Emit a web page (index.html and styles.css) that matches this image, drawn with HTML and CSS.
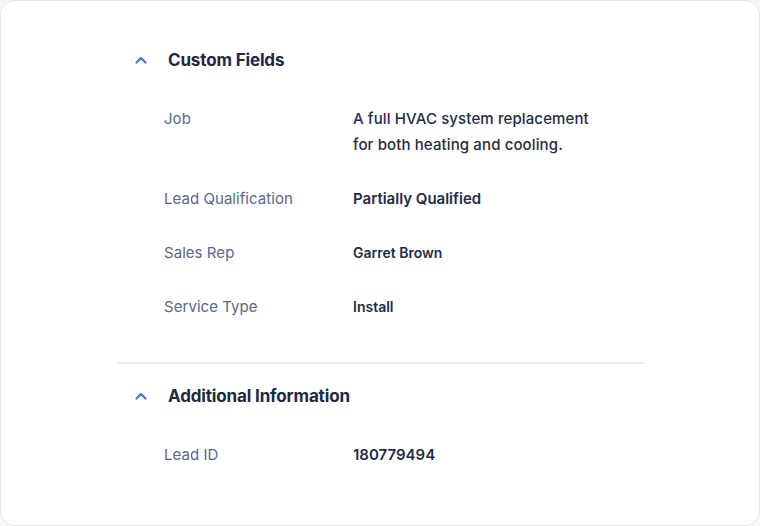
FILE: index.html
```html
<!DOCTYPE html>
<html>
<head>
<meta charset="utf-8">
<link rel="stylesheet" href="styles.css">
</head>
<body>
<div class="card">
  <section class="section">
    <div class="section-header">
      <svg class="chevron" width="12" height="8" viewBox="0 0 12 8"><path d="M1.5 6.5 L6 2 L10.5 6.5" fill="none" stroke="#4477cc" stroke-width="2.2" stroke-linecap="round" stroke-linejoin="round"/></svg>
      <h2 class="section-title">Custom Fields</h2>
    </div>
    <div class="rows">
      <div class="row"><div class="label">Job</div><div class="value wide">A full HVAC system replacement<br>for both heating and cooling.</div></div>
      <div class="row"><div class="label">Lead Qualification</div><div class="value strong">Partially Qualified</div></div>
      <div class="row"><div class="label">Sales Rep</div><div class="value small">Garret Brown</div></div>
      <div class="row"><div class="label">Service Type</div><div class="value small">Install</div></div>
    </div>
  </section>
  <div class="divider"></div>
  <section class="section">
    <div class="section-header">
      <svg class="chevron" width="12" height="8" viewBox="0 0 12 8"><path d="M1.5 6.5 L6 2 L10.5 6.5" fill="none" stroke="#4477cc" stroke-width="2.2" stroke-linecap="round" stroke-linejoin="round"/></svg>
      <h2 class="section-title">Additional Information</h2>
    </div>
    <div class="rows">
      <div class="row"><div class="label">Lead ID</div><div class="value strong">180779494</div></div>
    </div>
  </section>
</div>
</body>
</html>
```
FILE: styles.css
```css
* { box-sizing: border-box; }
html, body { margin: 0; padding: 0; background: #f7f8fa; }
body { font-family: Inter, "Noto Sans", sans-serif; }
.card {
  width: 760px;
  height: 526px;
  background: #ffffff;
  border: 1px solid #e4e7ef;
  border-radius: 14px;
  padding: 47px 115px 0 116px;
}
.section { padding-bottom: 42px; }
.section + .divider + .section { padding-top: 20px; }
.section-header {
  display: flex;
  align-items: center;
  height: 24px;
  padding-left: 18px;
  gap: 21px;
}
.chevron { display: block; }
.section-title {
  margin: 0;
  font-size: 17px;
  font-weight: 650;
  color: #222842;
  letter-spacing: -0.15px;
}
.rows {
  margin-top: 34px;
  padding-left: 47px;
  display: flex;
  flex-direction: column;
  gap: 28px;
}
.row { display: flex; line-height: 26px; }
.label {
  width: 189px;
  flex: none;
  font-size: 15px;
  color: #5b6688;
  letter-spacing: 0.05px;
}
.value {
  font-size: 15px;
  font-weight: 500;
  color: #252b44;
}
.value.wide { letter-spacing: 0.12px; }
.value.strong { font-weight: 600; }
.value.small { font-size: 14px; font-weight: 600; }
.divider { height: 2px; background: #e9ecf2; }
```
